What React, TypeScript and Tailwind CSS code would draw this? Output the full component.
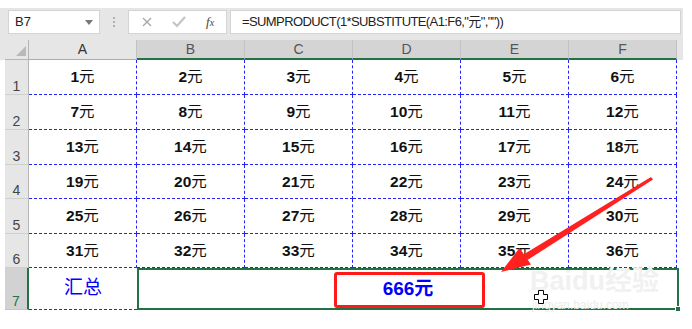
import React from "react";

const cols = ["A", "B", "C", "D", "E", "F"];
const rowHeights = ["h-[35px]", "h-[35px]", "h-[35px]", "h-[34px]", "h-[35px]", "h-[34px]"];

const cellFont = { fontFamily: '"Liberation Sans", Arial, "Noto Sans CJK SC", sans-serif' };

function Cell({ n }: { n: number }) {
  return (
    <div className="w-[108px] h-full flex items-center justify-center border-r border-b border-dashed border-[#2323ff] text-[15.5px] text-[#111]">
      <span className="font-bold">{n}</span>
      <span className="font-normal">元</span>
    </div>
  );
}

function RowHead({ label, active }: { label: string; active?: boolean }) {
  return (
    <div
      className={
        "w-[24px] h-full flex items-end justify-center pb-[1px] text-[14px] leading-none border-b " +
        (active
          ? "bg-[#d2d2d2] text-[#217346] border-r-2 border-r-[#217346] border-b-[#c4c4c4]"
          : "bg-[#e6e6e6] text-[#444] border-r border-r-[#b5b5b5] border-b-[#cfcfcf]")
      }
    >
      {label}
    </div>
  );
}

export default function App() {
  const rows = [0, 1, 2, 3, 4, 5];

  return (
    <div className="relative w-[692px] h-[329px] bg-white overflow-hidden" style={cellFont}>
      <div className="h-2" />

      {/* formula bar */}
      <div className="flex items-start w-[683px] h-[32px] pt-[2px] bg-[#e6e6e6]">
        <div className="ml-2 w-[92px] h-[24px] bg-white border border-[#d4d4d4] flex items-center pl-[6px] pr-[6px] text-[13px] text-[#222]">
          <span className="flex-1">B7</span>
          <svg width="8" height="5" viewBox="0 0 8 5">
            <path d="M0 0 L8 0 L4 5 Z" fill="#777" />
          </svg>
        </div>
        <div className="w-[28px] h-[24px] flex flex-col items-center justify-center gap-[2px]">
          <div className="w-[2px] h-[2px] bg-[#b0b0b0]" />
          <div className="w-[2px] h-[2px] bg-[#b0b0b0]" />
          <div className="w-[2px] h-[2px] bg-[#b0b0b0]" />
        </div>
        <div className="w-[99px] h-[24px] bg-white border border-[#d4d4d4] flex items-center">
          <svg className="ml-[13px]" width="10" height="10" viewBox="0 0 10 10">
            <path d="M1 1 L9 9 M9 1 L1 9" stroke="#a6a6a6" strokeWidth="1.3" />
          </svg>
          <svg className="ml-[20px]" width="14" height="12" viewBox="0 0 14 12">
            <path d="M1 6 L5 10 L13 1" stroke="#c4c4c4" strokeWidth="2.2" fill="none" />
          </svg>
          <span
            className="ml-[20px] text-[13px] italic text-[#444]"
            style={{ fontFamily: '"Liberation Serif", serif' }}
          >
            f<span className="text-[10px]">x</span>
          </span>
        </div>
        <div className="ml-[3px] mr-[2px] flex-1 h-[24px] bg-white border border-[#d4d4d4] flex items-center pl-[11px] text-[13px] tracking-[-0.6px] text-[#222]">
          =SUMPRODUCT(1*SUBSTITUTE(A1:F6,"元",""))
        </div>
      </div>

      {/* column headers */}
      <div className="flex w-[683px] h-[20px] pl-[5px] bg-[#e6e6e6]">
        <div className="w-[24px] h-full relative border-r border-b border-[#b5b5b5]">
          <svg className="absolute right-[2px] bottom-[3px]" width="10" height="10" viewBox="0 0 10 10">
            <path d="M10 0 L10 10 L0 10 Z" fill="#b9b9b9" />
          </svg>
        </div>
        {cols.map((c, i) => (
          <div
            key={c}
            className={
              "w-[108px] h-full flex items-center justify-center text-[14px] border-r border-r-[#c2c2c2] " +
              (i === 0
                ? "bg-[#e6e6e6] text-[#333] border-b border-b-[#ababab]"
                : "bg-[#d4d4d4] text-[#555] border-b-2 border-b-[#217346]")
            }
          >
            {c}
          </div>
        ))}
      </div>

      {/* rows 1-6 */}
      {rows.map((r) => (
        <div key={r} className={"flex pl-[5px] " + rowHeights[r]}>
          <RowHead label={String(r + 1)} />
          {cols.map((c, i) => (
            <Cell key={c} n={r * 6 + i + 1} />
          ))}
        </div>
      ))}

      {/* row 7 */}
      <div className="flex pl-[5px] h-[42px]">
        <RowHead label="7" active />
        <div className="w-[108px] h-full flex items-center justify-center border-b border-dashed border-[#2323ff] text-[19px] text-[#0000ff]">
          汇总
        </div>
        <div className="relative w-[542px] h-full border-2 border-[#217346] flex items-center justify-center text-[19px] font-bold text-[#0000ff]">
          666元
          <div className="absolute -right-[4px] -bottom-[4px] w-[6px] h-[6px] bg-[#217346] border border-white" />
        </div>
      </div>

      {/* watermark */}
      <div className="absolute left-[530px] top-[268px] text-[27px] font-bold text-[#f1f1f1] leading-none">
        Baidu经验
      </div>
      <div className="absolute left-[532px] top-[299px] text-[12px] text-[#ececec] leading-none">
        jingyan.baidu.com
      </div>

      {/* red highlight box */}
      <div className="absolute left-[334px] top-[272px] w-[151px] h-[36px] border-[3px] border-[#ff1a1a] rounded-[3px]" />

      {/* red arrow */}
      <svg className="absolute left-0 top-0 pointer-events-none" width="692" height="329" viewBox="0 0 692 329">
        <polygon points="651,177 653,179.5 527.5,260 523.5,254.5" fill="#ff2020" />
        <polygon points="501,272 531,264.5 519.5,248" fill="#ff2020" />
      </svg>

      {/* cursor */}
      <svg className="absolute left-[534px] top-[290px]" width="14" height="14" viewBox="0 0 14 14">
        <path
          d="M4.5 0.5 H9.5 V4.5 H13.5 V9.5 H9.5 V13.5 H4.5 V9.5 H0.5 V4.5 H4.5 Z"
          fill="#fff"
          stroke="#000"
          strokeWidth="1"
        />
      </svg>
    </div>
  );
}
